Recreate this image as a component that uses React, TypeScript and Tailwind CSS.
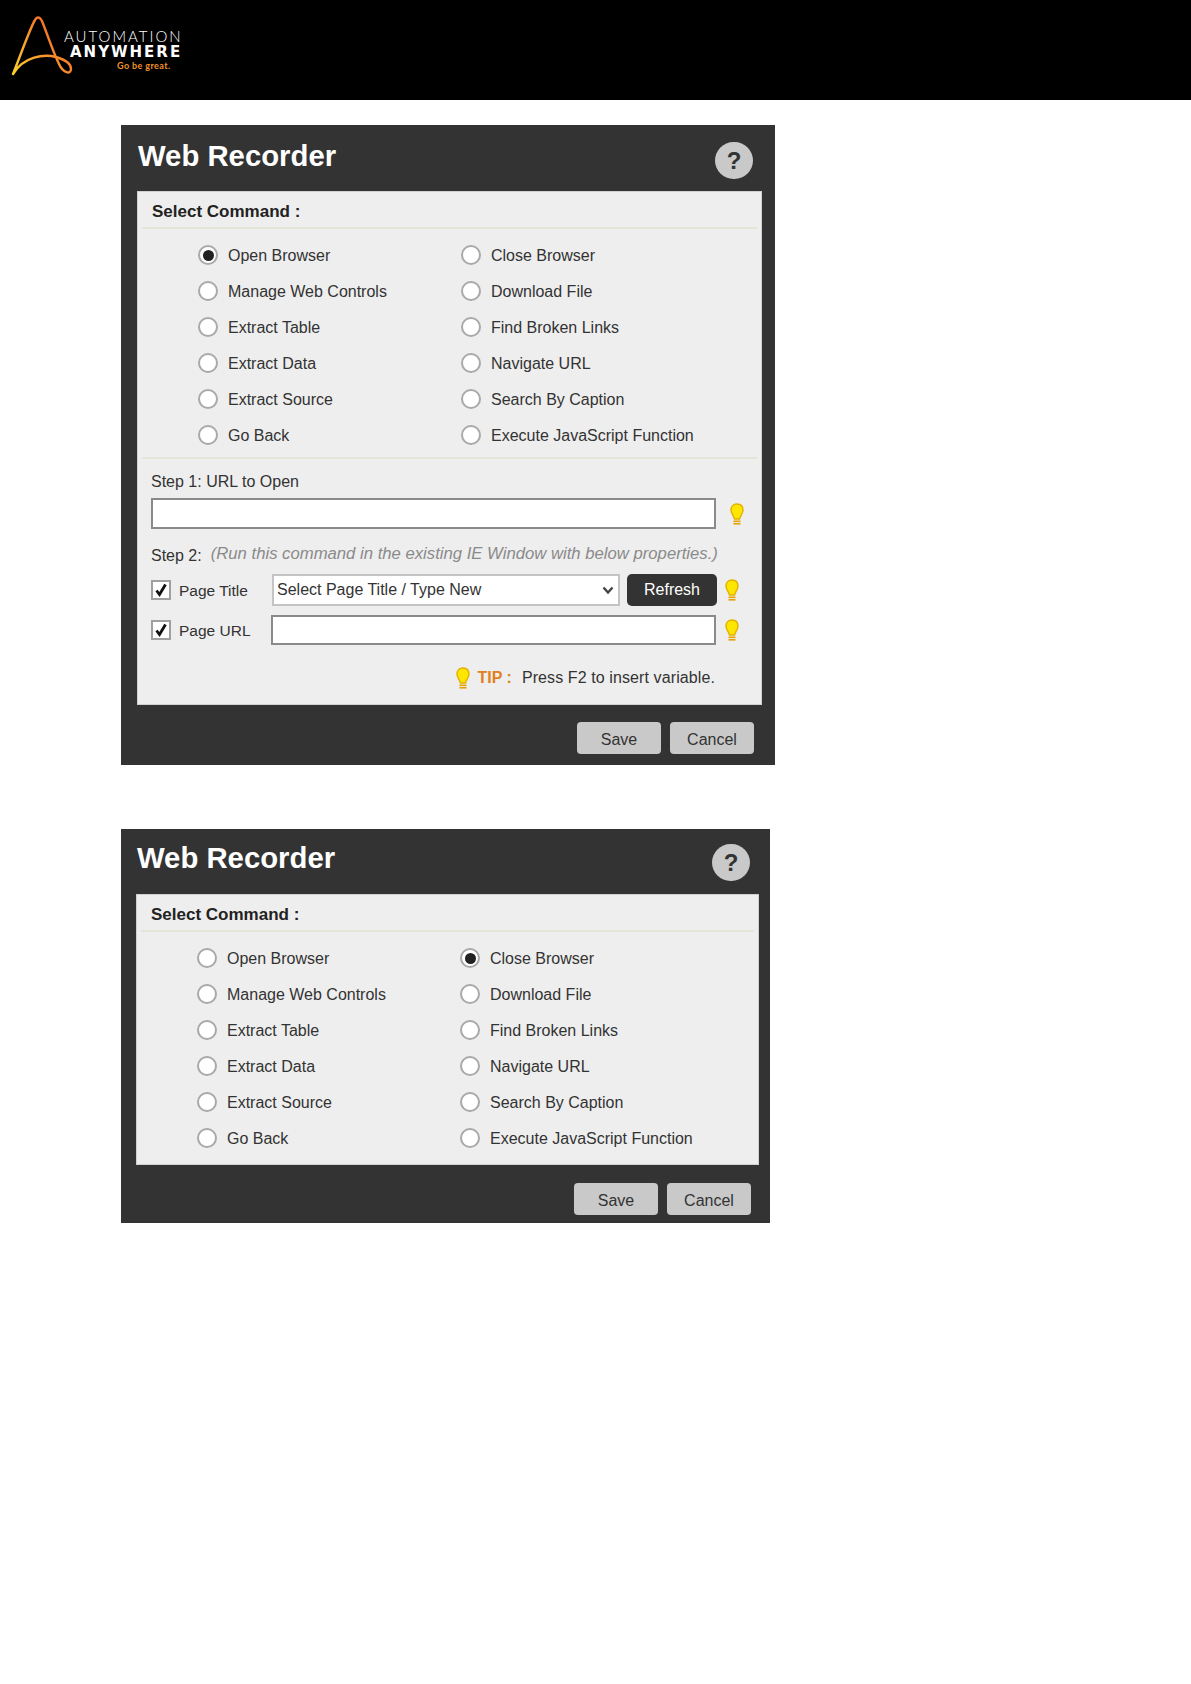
import type { ReactNode } from "react";

const leftCommands = ["Open Browser", "Manage Web Controls", "Extract Table", "Extract Data", "Extract Source", "Go Back"];
const rightCommands = ["Close Browser", "Download File", "Find Broken Links", "Navigate URL", "Search By Caption", "Execute JavaScript Function"];

const Logo = () => (
  <div className="flex h-[100px] bg-black">
    <svg width="64" height="100" viewBox="0 0 64 100" className="shrink-0 overflow-visible">
      <defs>
        <linearGradient id="logoStroke" x1="0" y1="1" x2="1" y2="0.2">
          <stop offset="0" stopColor="#fcd22b" />
          <stop offset="0.45" stopColor="#f99a2a" />
          <stop offset="1" stopColor="#ee5a28" />
        </linearGradient>
      </defs>
      <path
        d="M13 74 C18 62 30 28 35 20 C37 16 40 17 42 21 C48 36 53 52 59 64 C63 73 71 75 71 69 C71 63 63 59 56 57 C44 54 24 56 13 74"
        fill="none"
        stroke="url(#logoStroke)"
        strokeWidth="2.4"
        strokeLinecap="round"
      />
    </svg>
    <div className="w-[118px] pt-[28px] font-['Lato',sans-serif]">
      <div className="text-[15px] leading-[17px] font-light tracking-[2px] text-white whitespace-nowrap">AUTOMATION</div>
      <div className="ml-[6px] font-['DejaVu_Sans',sans-serif] text-[15px] leading-[15px] font-bold tracking-[2px] text-white whitespace-nowrap">ANYWHERE</div>
      <div className="ml-[53px] text-[9px] leading-[12px] font-bold tracking-[0.4px] text-[#f0912a] whitespace-nowrap">Go be great.</div>
    </div>
  </div>
);

const Bulb = () => (
  <svg width="16" height="22" viewBox="0 0 16 22" className="shrink-0">
    <path
      d="M8 1 C3.8 1 2 4 2 7.2 C2 10.6 4.8 12.4 5.4 16 L10.6 16 C11.2 12.4 14 10.6 14 7.2 C14 4 12.2 1 8 1 Z"
      fill="#ffe600"
      stroke="#e2b100"
      strokeWidth="1.4"
    />
    <rect x="4.5" y="17.5" width="7" height="1.6" fill="#e8a200" />
    <rect x="4.5" y="20" width="7" height="1.6" fill="#e8a200" />
  </svg>
);

const Radio = ({ label, checked }: { label: string; checked?: boolean }) => (
  <div className="flex h-9 items-center gap-[10px]">
    <div className="flex h-5 w-5 shrink-0 items-center justify-center rounded-full border-2 border-[#a9a9a9] bg-white">
      {checked && <div className="h-[11px] w-[11px] rounded-full bg-[#222222]" />}
    </div>
    <span className="pt-[1px] text-[16px] leading-5 text-[#333333] whitespace-nowrap">{label}</span>
  </div>
);

const Checkbox = () => (
  <div className="flex h-5 w-5 shrink-0 items-center justify-center border-2 border-[#a0a0a0] bg-white">
    <svg width="14" height="14" viewBox="0 0 14 14">
      <path d="M2.5 7.5 L5.5 11.5 L11.5 1.5" fill="none" stroke="#111111" strokeWidth="2.8" />
    </svg>
  </div>
);

const CommandList = ({ selected }: { selected: string }) => (
  <div className="grid grid-cols-[263px_1fr] pl-[60px] pt-[8px]">
    {leftCommands.map((left, i) => (
      <div key={left} className="contents">
        <Radio label={left} checked={left === selected} />
        <Radio label={rightCommands[i]} checked={rightCommands[i] === selected} />
      </div>
    ))}
  </div>
);

const SectionTitle = () => (
  <div className="mx-[4px] h-[37px] border-b-2 border-[#e4e4d8] pl-[10px] pt-[10px] text-[17px] leading-5 font-bold text-[#222222]">
    Select Command :
  </div>
);

const FooterButton = ({ children }: { children: ReactNode }) => (
  <button className="h-8 w-[84px] rounded-[4px] bg-[#c9c9c9] pt-[3px] text-[16px] text-[#333333]">{children}</button>
);

const Help = () => (
  <div className="flex h-[37px] w-[38px] items-center justify-center rounded-full bg-[#c9c9c9] text-[24px] font-bold text-[#333333]">?</div>
);

const StepsForm = () => (
  <div className="mx-[4px] mt-[4px] border-t-2 border-[#e4e4d8] pl-[9px] pt-[13px] text-[16px] leading-5 text-[#333333]">
    <div>Step 1: URL to Open</div>
    <div className="mt-[6px] flex items-center gap-[13px]">
      <div className="h-[31px] w-[565px] border-2 border-[#8a8a8a] bg-white" />
      <Bulb />
    </div>
    <div className="mt-[17px] flex items-center gap-[9px]">
      <span>Step 2:</span>
      <span className="-mt-[4px] text-[16.7px] italic text-[#8a8a8a] whitespace-nowrap">(Run this command in the existing IE Window with below properties.)</span>
    </div>
    <div className="mt-[8px] flex h-8 items-center">
      <Checkbox />
      <span className="ml-[8px] w-[93px] pt-[1px] text-[15.5px]">Page Title</span>
      <div className="flex h-8 w-[348px] items-center justify-between border-2 border-[#c4c4c4] bg-white pl-[3px] pr-[4px]">
        <span>Select Page Title / Type New</span>
        <svg width="12" height="10" viewBox="0 0 12 10">
          <path d="M1.5 2.5 L6 7.5 L10.5 2.5" fill="none" stroke="#444444" strokeWidth="2.4" />
        </svg>
      </div>
      <button className="ml-[7px] h-8 w-[90px] rounded-[5px] bg-[#333333] text-[16px] text-white">Refresh</button>
      <div className="ml-[7px]">
        <Bulb />
      </div>
    </div>
    <div className="mt-[9px] flex h-[30px] items-center">
      <Checkbox />
      <span className="ml-[8px] w-[92px] pt-[1px] text-[15.5px]">Page URL</span>
      <div className="h-[30px] w-[445px] border-2 border-[#8a8a8a] bg-white" />
      <div className="ml-[8px]">
        <Bulb />
      </div>
    </div>
    <div className="mt-[23px] flex h-5 items-center justify-end pr-[42px]">
      <Bulb />
      <span className="ml-[7px] font-bold text-[#e08020]">TIP :</span>
      <span className="ml-[10px] tracking-[0.1px]">Press F2 to insert variable.</span>
    </div>
  </div>
);

export default function App() {
  return (
    <div className="min-h-[1684px] bg-white font-['Liberation_Sans',Arial,sans-serif]">
      <Logo />

      <div className="ml-[121px] mt-[25px] h-[640px] w-[654px] bg-[#333333]">
        <div className="flex h-[66px] items-start justify-between pl-[17px] pr-[22px] pt-[14px]">
          <h1 className="text-[29.3px] leading-[34px] font-bold text-white">Web Recorder</h1>
          <div className="mt-[3px]">
            <Help />
          </div>
        </div>
        <div className="ml-[16px] h-[514px] w-[625px] border border-[#d0d0d0] bg-[#eeeeee]">
          <SectionTitle />
          <CommandList selected="Open Browser" />
          <StepsForm />
        </div>
        <div className="flex justify-end gap-[9px] pr-[21px] pt-[17px]">
          <FooterButton>Save</FooterButton>
          <FooterButton>Cancel</FooterButton>
        </div>
      </div>

      <div className="ml-[121px] mt-[64px] h-[394px] w-[649px] bg-[#333333]">
        <div className="flex h-[65px] items-start justify-between pl-[16px] pr-[20px] pt-[12px]">
          <h1 className="text-[29.3px] leading-[34px] font-bold text-white">Web Recorder</h1>
          <div className="mt-[3px]">
            <Help />
          </div>
        </div>
        <div className="ml-[15px] h-[271px] w-[623px] border border-[#d0d0d0] bg-[#eeeeee]">
          <SectionTitle />
          <CommandList selected="Close Browser" />
        </div>
        <div className="flex justify-end gap-[9px] pr-[19px] pt-[18px]">
          <FooterButton>Save</FooterButton>
          <FooterButton>Cancel</FooterButton>
        </div>
      </div>
    </div>
  );
}
